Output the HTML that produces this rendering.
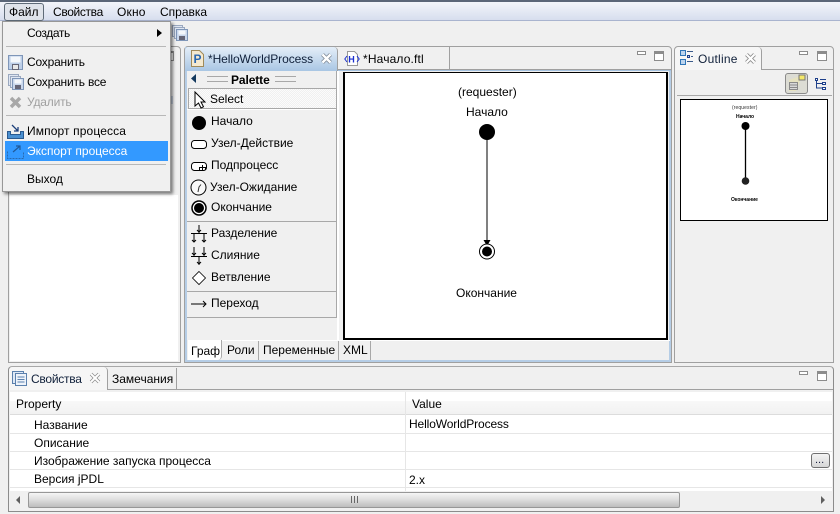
<!DOCTYPE html>
<html><head><meta charset="utf-8">
<style>
html,body{margin:0;padding:0}
body{width:840px;height:514px;position:relative;overflow:hidden;background:#f0f0f0;font-family:"Liberation Sans",sans-serif;font-size:12px;color:#000}
.a{position:absolute;box-sizing:border-box}
.t{position:absolute;white-space:nowrap;line-height:14px;height:14px}
svg{position:absolute;overflow:visible}
</style></head><body>
<div class="a" style="left:0;top:0;width:840px;height:2px;background:#5b6678"></div>
<div class="a" style="left:0;top:2px;width:840px;height:19px;background:linear-gradient(#f3f5fa,#d7deee);border-bottom:1px solid #a9b4cf"></div>
<div class="a" style="left:4px;top:3px;width:40px;height:18px;border:1px solid #5f6b78;border-radius:3px;background:#dfe3ea"></div>
<div class="t" style="left:9px;top:5px">Файл</div>
<div class="t" style="left:53px;top:5px;letter-spacing:-.35px">Свойства</div>
<div class="t" style="left:117px;top:5px;letter-spacing:.2px">Окно</div>
<div class="t" style="left:160px;top:5px">Справка</div>

<!-- toolbar save-all icon -->
<svg style="left:172px;top:25px" width="16" height="16"><rect x=".5" y=".5" width="10" height="11" fill="#dfe6f2" stroke="#9aa8bf"/><rect x="2.500" y="2.500" width="10" height="11" fill="#dfe6f2" stroke="#9aa8bf"/><rect x="4.500" y="4.500" width="11" height="11" fill="#c9d7ec" stroke="#7f96b8"/><rect x="6.500" y="5.500" width="7" height="4" fill="#f4f7fb"/><rect x="7" y="11" width="6" height="4" fill="#667"/></svg>

<!-- left panel -->
<div class="a" style="left:8px;top:46px;width:173px;height:317px;border:1px solid #a0a0a0;border-radius:4px 4px 0 0;background:#f0f0f0"></div>
<div class="a" style="left:10px;top:195px;width:168px;height:166px;background:#fff"></div>
<div class="a" style="left:171px;top:51px;width:3px;height:10px;border:1px solid #8c8c8c;border-left:0;border-top-width:2px"></div>
<div class="a" style="left:171px;top:96px;width:2px;height:8px;background:#c5cfdd"></div>

<!-- editor panel -->
<div class="a" style="left:184px;top:46px;width:488px;height:317px;border:1px solid #a0a0a0;border-radius:4px 4px 0 0;background:#f0f0f0"></div>
<div class="a" style="left:185px;top:47px;width:2px;height:314px;background:#b5cde6"></div>
<div class="a" style="left:185px;top:360px;width:486px;height:2px;background:#b5cde6"></div>
<div class="a" style="left:669px;top:70px;width:2px;height:291px;background:#b5cde6"></div>
<div class="a" style="left:185px;top:69px;width:486px;height:2px;background:#a5c2e0"></div>
<div class="a" style="left:185px;top:47px;width:153px;height:24px;background:linear-gradient(#e4eef8,#a9c6e4);border-radius:4px 4px 0 0;border-right:1px solid #a0a0a0"></div>
<div class="a" style="left:338px;top:47px;width:112px;height:23px;background:#f0f0f0;border-right:1px solid #a0a0a0;border-bottom:1px solid #a0a0a0"></div>
<div class="a" style="left:450px;top:69px;width:221px;height:1px;background:#a0a0a0"></div>
<svg style="left:191px;top:50px" width="13" height="17"><path d="M.5.5h8l4 4v12H.5z" fill="#f5e9cf" stroke="#a08a5a"/><text x="2.500" y="13" font-family="Liberation Sans" font-size="12" font-weight="bold" fill="#2b68b0">P</text></svg>
<div class="t" style="left:208px;top:52px;color:#10203a;letter-spacing:-.08px">*HelloWorldProcess</div>
<svg style="left:321px;top:53px" width="11" height="11"><path d="M1.500 1.500l8 8M9.500 1.500l-8 8" stroke="#7d8794" stroke-width="4"/><path d="M1.500 1.500l8 8M9.500 1.500l-8 8" stroke="#fff" stroke-width="2.400"/></svg>
<svg style="left:344px;top:51px" width="16" height="16"><path d="M3.500.5h7l3 3v11h-10z" fill="#fff" stroke="#9a9a9a"/><text x="4.200" y="11.500" font-family="Liberation Sans" font-size="9" font-weight="bold" fill="#1a2fd0">H</text><path d="M3 5L.8 8 3 11M13 5l2.200 3L13 11" fill="none" stroke="#1a2fd0"/></svg>
<div class="t" style="left:363px;top:52px;letter-spacing:.15px">*Начало.ftl</div>
<div class="a" style="left:637px;top:51px;width:9px;height:4px;border:1px solid #8c8c8c;background:#fff"></div>
<div class="a" style="left:654px;top:51px;width:10px;height:10px;border:1px solid #8c8c8c;border-top-width:3px;background:#fff"></div>

<!-- palette -->
<svg style="left:191px;top:74px" width="6" height="9"><path d="M5 0v9L0 4.500z" fill="#13395e"/></svg>
<div class="a" style="left:207px;top:76px;width:21px;height:6px;border-top:1px solid #a8a8a8;border-bottom:1px solid #a8a8a8"></div>
<div class="t" style="left:231px;top:73px;font-weight:bold;letter-spacing:-.1px">Palette</div>
<div class="a" style="left:275px;top:76px;width:21px;height:6px;border-top:1px solid #a8a8a8;border-bottom:1px solid #a8a8a8"></div>
<div class="a" style="left:188px;top:88px;width:149px;height:21px;border:1px solid #a8a8a8;border-right-color:#fff;border-bottom-color:#a8a8a8;background:repeating-conic-gradient(#f0f0f0 0 25%,#fbfbfb 0 50%) 0 0/2px 2px"></div>
<svg style="left:194px;top:91px" width="12" height="18"><path d="M1 1v14l3.500-3 2.500 5 2.500-1.200-2.500-4.800H11z" fill="#fff" stroke="#000"/></svg>
<div class="t" style="left:210px;top:92px">Select</div>
<div class="a" style="left:187px;top:109px;width:150px;height:1px;background:#fff"></div>
<div class="a" style="left:187px;top:221px;width:150px;height:1px;background:#a8a8a8"></div>
<div class="a" style="left:187px;top:291px;width:150px;height:1px;background:#a8a8a8"></div>
<div class="a" style="left:187px;top:317px;width:150px;height:1px;background:#a8a8a8"></div>
<div class="a" style="left:336px;top:71px;width:1px;height:247px;background:#a8a8a8"></div>
<div class="a" style="left:337px;top:71px;width:2px;height:269px;background:#fff"></div>

<svg style="left:192px;top:116px" width="14" height="14"><circle cx="7" cy="7" r="7"/></svg>
<div class="t" style="left:211px;top:114px">Начало</div>
<svg style="left:191px;top:140px" width="16" height="9"><rect x=".5" y=".5" width="15" height="8" rx="3" fill="#fff" stroke="#000"/></svg>
<div class="t" style="left:211px;top:136px">Узел-Действие</div>
<svg style="left:191px;top:162px" width="16" height="9"><rect x=".5" y=".5" width="15" height="8" rx="3" fill="#fff" stroke="#000"/><path d="M11.500 3v5M8.500 8V5.500h6V8" fill="none" stroke="#000"/></svg>
<div class="t" style="left:211px;top:158px">Подпроцесс</div>
<svg style="left:190px;top:179px" width="17" height="17"><circle cx="8.500" cy="8.500" r="7.500" fill="#f8f8f8" stroke="#000"/><path d="M8 13l1-5 2-2.500" fill="none" stroke="#333"/></svg>
<div class="t" style="left:210px;top:180px">Узел-Ожидание</div>
<svg style="left:191px;top:200px" width="16" height="16"><circle cx="8" cy="8" r="7" fill="#fff" stroke="#000" stroke-width="1.500"/><circle cx="8" cy="8" r="5"/></svg>
<div class="t" style="left:211px;top:200px">Окончание</div>
<svg style="left:191px;top:225px" width="16" height="18" stroke="#000" fill="none"><path d="M0 8.500h16M8 0v8M3 9v8M13 9v8M6 5l2 2 2-2M1 15l2 2 2-2M11 15l2 2 2-2"/></svg>
<div class="t" style="left:211px;top:226px">Разделение</div>
<svg style="left:191px;top:247px" width="16" height="18" stroke="#000" fill="none"><path d="M0 9.500h16M3 0v9M13 0v9M8 10v8M1 6l2 2 2-2M11 6l2 2 2-2M6 15l2 2 2-2"/></svg>
<div class="t" style="left:211px;top:248px">Слияние</div>
<svg style="left:192px;top:271px" width="14" height="14"><path d="M7 .5L13.500 7 7 13.500.5 7z" fill="#fff" stroke="#000" stroke-width=".8"/></svg>
<div class="t" style="left:211px;top:270px">Ветвление</div>
<svg style="left:191px;top:300px" width="16" height="8" fill="none" stroke="#000"><path d="M0 4h15M12 1l3 3-3 3"/></svg>
<div class="t" style="left:211px;top:296px">Переход</div>

<!-- canvas -->
<div class="a" style="left:343px;top:72px;width:325px;height:268px;border:2px solid #000;background:#fff;border-top-width:1.500px"></div>
<div class="t" style="left:458px;top:85px">(requester)</div>
<div class="t" style="left:466px;top:105px">Начало</div>
<svg style="left:479px;top:124px" width="16" height="136"><circle cx="8" cy="8" r="8"/><path d="M8 8v112" stroke="#000" stroke-width="1" fill="none"/><path d="M4.500 116h7L8 122z"/><circle cx="8" cy="127.500" r="7.500" fill="#fff" stroke="#000"/><circle cx="8" cy="127.500" r="5"/></svg>
<div class="t" style="left:456px;top:286px">Окончание</div>

<!-- editor bottom tabs -->
<div class="a" style="left:222px;top:340px;width:448px;height:1px;background:#fff"></div>
<div class="a" style="left:188px;top:340px;width:34px;height:20px;background:#fff;border-right:1px solid #a8a8a8;border-radius:0 0 4px 0"></div>
<div class="a" style="left:258px;top:341px;width:1px;height:19px;background:#a8a8a8"></div>
<div class="a" style="left:338px;top:341px;width:1px;height:19px;background:#a8a8a8"></div>
<div class="a" style="left:370px;top:341px;width:1px;height:19px;background:#a8a8a8"></div>
<div class="t" style="left:191px;top:344px">Граф</div>
<div class="t" style="left:227px;top:343px">Роли</div>
<div class="t" style="left:263px;top:343px">Переменные</div>
<div class="t" style="left:343px;top:343px">XML</div>

<!-- outline panel -->
<div class="a" style="left:674px;top:46px;width:160px;height:317px;border:1px solid #a0a0a0;border-radius:4px 4px 0 0;background:#f0f0f0"></div>
<div class="a" style="left:675px;top:69px;width:158px;height:1px;background:#a0a0a0"></div>
<div class="a" style="left:675px;top:47px;width:87px;height:23px;background:#f6f6f6;border-right:1px solid #a0a0a0;border-radius:4px 4px 0 0"></div>
<svg style="left:680px;top:50px" width="14" height="15" fill="#bcd4ee" stroke="#2f75b8"><rect x=".5" y=".5" width="5" height="5"/><rect x=".5" y="9.500" width="5" height="5"/><rect x="7.500" y="5.500" width="2" height="2" stroke="#1d3f8a"/><path d="M7 1.500h6M11 6.500h2M7 11.500h6" stroke="#3a5a8a"/></svg>
<div class="t" style="left:698px;top:52px;color:#10203a;letter-spacing:.02em">Outline</div>
<svg style="left:745px;top:53px" width="11" height="11"><path d="M1.500 1.500l8 8M9.500 1.500l-8 8" stroke="#8b8b8b" stroke-width="3.800"/><path d="M1.500 1.500l8 8M9.500 1.500l-8 8" stroke="#fff" stroke-width="2.200"/></svg>
<div class="a" style="left:799px;top:51px;width:9px;height:4px;border:1px solid #8c8c8c;background:#fff"></div>
<div class="a" style="left:817px;top:51px;width:10px;height:10px;border:1px solid #8c8c8c;border-top-width:3px;background:#fff"></div>
<div class="a" style="left:785px;top:73px;width:23px;height:21px;border:1px solid #8a8a8a;border-radius:3px;background:#dcdcd4"></div>
<svg style="left:788px;top:75px" width="18" height="16"><path d="M1 5L12 1h2L8 16H1z" fill="#e6e2c0"/><rect x="1.500" y="7.500" width="8" height="7" fill="#d8d8d8" stroke="#8a8a8a"/><path d="M2 10h7M2 12.500h7" stroke="#8a8a8a"/><rect x="11" y="0" width="6" height="5" fill="#f5e96a" stroke="#777"/></svg>
<svg style="left:815px;top:78px" width="12" height="12" fill="#fff" stroke="#1d3f8a"><rect x=".5" y=".5" width="2" height="2"/><rect x="7.500" y="4.500" width="3" height="2"/><rect x="7.500" y="9.500" width="3" height="2"/><path d="M1.500 3v7h6M1.500 5.500h6M5 1.500h6" fill="none"/></svg>
<div class="a" style="left:677px;top:95px;width:155px;height:1px;background:#a8a8a8"></div>
<div class="a" style="left:680px;top:99px;width:148px;height:122px;border:1px solid #000;background:#fff"></div>
<div class="t" style="left:732px;top:101px;font-size:5px;color:#333;letter-spacing:.1px">(requester)</div>
<div class="t" style="left:736px;top:110px;font-size:5px;font-weight:bold">Начало</div>
<div class="t" style="left:731px;top:193px;font-size:5px;font-weight:bold">Окончание</div>
<svg style="left:741px;top:122px" width="9" height="64"><circle cx="4.500" cy="4" r="4"/><path d="M4.500 4v52" stroke="#000" stroke-width="1.300"/><circle cx="4.500" cy="59" r="3.800" fill="#222"/></svg>

<!-- bottom panel -->
<div class="a" style="left:8px;top:366px;width:826px;height:146px;border:1px solid #8c8c8c;border-top-color:#a8a8a8;border-radius:4px 4px 0 0;background:#f0f0f0"></div>
<div class="a" style="left:9px;top:389px;width:824px;height:1px;background:#a0a0a0"></div>
<div class="a" style="left:9px;top:367px;width:99px;height:23px;background:#f6f6f6;border-right:1px solid #a0a0a0;border-radius:4px 4px 0 0"></div>
<div class="a" style="left:176px;top:368px;width:1px;height:21px;background:#a0a0a0"></div>
<svg style="left:12px;top:371px" width="15" height="15" fill="#dfe9f6" stroke="#5b80ad"><rect x=".5" y=".5" width="11" height="12"/><rect x="3.500" y="2.500" width="11" height="12" fill="#eef3fa"/><path d="M5.500 6h7M5.500 8.500h7M5.500 11h7"/></svg>
<div class="t" style="left:31px;top:372px;color:#10203a;letter-spacing:-.25px">Свойства</div>
<svg style="left:90px;top:373px" width="10" height="10"><path d="M1 1l8 8M9 1L1 9" stroke="#8b8b8b" stroke-width="3.400"/><path d="M1 1l8 8M9 1L1 9" stroke="#fff" stroke-width="2"/></svg>
<div class="t" style="left:112px;top:372px">Замечания</div>
<div class="a" style="left:799px;top:371px;width:9px;height:4px;border:1px solid #8c8c8c;background:#fff"></div>
<div class="a" style="left:817px;top:371px;width:10px;height:10px;border:1px solid #8c8c8c;border-top-width:3px;background:#fff"></div>

<div class="a" style="left:10px;top:392px;width:822px;height:99px;background:#fff"></div>
<div class="a" style="left:10px;top:401px;width:822px;height:13px;background:linear-gradient(#f8f8f8,#f2f2f2)"></div>
<div class="a" style="left:10px;top:414px;width:822px;height:1px;background:#dcdcdc"></div>
<div class="a" style="left:10px;top:433px;width:822px;height:1px;background:#e6e6e6"></div>
<div class="a" style="left:10px;top:451px;width:822px;height:1px;background:#e6e6e6"></div>
<div class="a" style="left:10px;top:469px;width:822px;height:1px;background:#e6e6e6"></div>
<div class="a" style="left:10px;top:487px;width:822px;height:1px;background:#e6e6e6"></div>
<div class="a" style="left:405px;top:392px;width:1px;height:99px;background:#e6e6e6"></div>
<div class="t" style="left:16px;top:397px">Property</div>
<div class="t" style="left:412px;top:397px">Value</div>
<div class="t" style="left:34px;top:418px">Название</div>
<div class="t" style="left:34px;top:436px">Описание</div>
<div class="t" style="left:34px;top:454px">Изображение запуска процесса</div>
<div class="t" style="left:34px;top:472px">Версия jPDL</div>
<div class="t" style="left:409px;top:417px;letter-spacing:-.12px">HelloWorldProcess</div>
<div class="t" style="left:409px;top:473px">2.x</div>
<div class="a" style="left:811px;top:453px;width:19px;height:15px;border:1px solid #707070;border-radius:3px;background:linear-gradient(#f4f4f4,#d6d6d6)"></div>
<div class="t" style="left:815px;top:453px;font-size:11px;color:#1a2040">...</div>
<!-- scrollbar -->
<div class="a" style="left:10px;top:491px;width:822px;height:19px;background:#f0f0f0"></div>
<svg style="left:16px;top:496px" width="4" height="8"><path d="M4 0v8L0 4z" fill="#606060"/></svg>
<svg style="left:821px;top:496px" width="4" height="8"><path d="M0 0v8l4-4z" fill="#606060"/></svg>
<div class="a" style="left:28px;top:492px;width:652px;height:16px;border:1px solid #979797;border-radius:2px;background:linear-gradient(#f5f5f5,#dcdcdc 50%,#bdbdbd)"></div>
<div class="a" style="left:351px;top:496px;width:7px;height:7px;background:repeating-linear-gradient(90deg,#666 0 1px,transparent 1px 3px)"></div>

<!-- menu -->
<div class="a" style="left:2px;top:21px;width:169px;height:171px;background:#f0f0f0;border:1px solid #979797;box-shadow:2px 2px 3px rgba(0,0,0,.5)"></div>
<div class="a" style="left:6px;top:46px;width:160px;height:1px;background:#b8b8b8"></div>
<div class="a" style="left:6px;top:115px;width:160px;height:1px;background:#b8b8b8"></div>
<div class="a" style="left:6px;top:164px;width:160px;height:1px;background:#b8b8b8"></div>
<div class="a" style="left:5px;top:141px;width:163px;height:20px;background:#3399ff"></div>
<div class="t" style="left:27px;top:26px;letter-spacing:-.4px">Создать</div>
<svg style="left:157px;top:29px" width="5" height="8"><path d="M0 0v8l5-4z"/></svg>
<svg style="left:8px;top:55px" width="15" height="15"><path d="M.5.500h14v14H.5z" fill="#bdcfe8" stroke="#7f96b8"/><rect x="2.500" y="1.500" width="10" height="6" fill="#f4f7fb"/><rect x="4.500" y="9.500" width="6" height="5" fill="#e8e8e8" stroke="#667"/></svg>
<div class="t" style="left:27px;top:55px;letter-spacing:-.2px">Сохранить</div>
<svg style="left:8px;top:74px" width="16" height="16"><rect x=".5" y=".5" width="10" height="11" fill="#dfe6f2" stroke="#9aa8bf"/><rect x="2.500" y="2.500" width="10" height="11" fill="#dfe6f2" stroke="#9aa8bf"/><rect x="4.500" y="4.500" width="11" height="11" fill="#c9d7ec" stroke="#7f96b8"/><rect x="6.500" y="5.500" width="7" height="4" fill="#f4f7fb"/><rect x="7" y="11" width="6" height="4" fill="#667"/></svg>
<div class="t" style="left:27px;top:75px;letter-spacing:-.2px">Сохранить все</div>
<svg style="left:9px;top:96px" width="13" height="13"><path d="M2 2l9 9M11 2l-9 9" stroke="#a8a8a8" stroke-width="3.500"/></svg>
<div class="t" style="left:27px;top:95px;color:#a0a0a0;letter-spacing:-.2px">Удалить</div>
<svg style="left:7px;top:124px" width="17" height="15"><path d="M.5 7.500v7h16v-7h-3v3h-10v-3z" fill="#4a8fd0" stroke="#2a5a90"/><path d="M5 1l6 6M11 3v4H7" fill="none" stroke="#1c3f7a" stroke-width="1.300"/></svg>
<div class="t" style="left:27px;top:124px;letter-spacing:.12px">Импорт процесса</div>
<svg style="left:7px;top:144px" width="17" height="15"><path d="M.5 7.500v7h16v-7" fill="none" stroke="#2a6ab0" stroke-dasharray="2 1"/><path d="M6 8l7-6M9 2h4v4" fill="none" stroke="#205a9a" stroke-width="1.200"/></svg>
<div class="t" style="left:27px;top:144px;color:#fff">Экспорт процесса</div>
<div class="t" style="left:27px;top:172px">Выход</div>
</body></html>
